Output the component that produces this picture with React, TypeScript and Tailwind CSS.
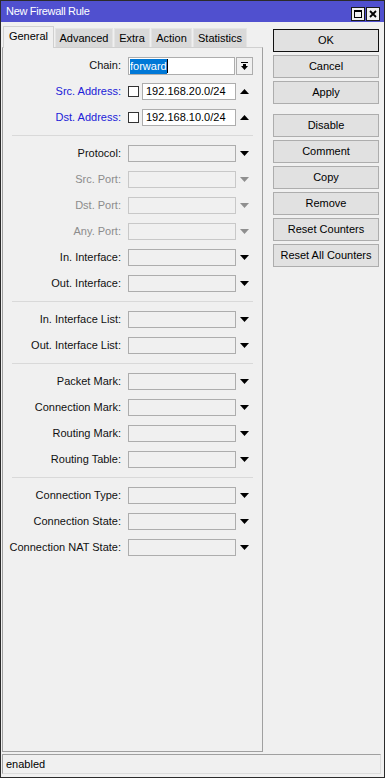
import React from "react";

type Row = { label: string; tone?: "dim" };

const GROUPS: Row[][] = [
    [
        { label: "Protocol" },
        { label: "Src. Port", tone: "dim" },
        { label: "Dst. Port", tone: "dim" },
        { label: "Any. Port", tone: "dim" },
        { label: "In. Interface" },
        { label: "Out. Interface" },
    ],
    [{ label: "In. Interface List" }, { label: "Out. Interface List" }],
    [
        { label: "Packet Mark" },
        { label: "Connection Mark" },
        { label: "Routing Mark" },
        { label: "Routing Table" },
    ],
    [
        { label: "Connection Type" },
        { label: "Connection State" },
        { label: "Connection NAT State" },
    ],
];

const TABS = [
    { title: "General", w: "w-[51px]", active: true },
    { title: "Advanced", w: "w-[58px]" },
    { title: "Extra", w: "w-[36px]" },
    { title: "Action", w: "w-[41px]" },
    { title: "Statistics", w: "w-[54px]" },
];

const BUTTONS = [
    ["OK", "Cancel", "Apply"],
    ["Disable", "Comment", "Copy", "Remove", "Reset Counters", "Reset All Counters"],
];

function Tri({ up, dim }: { up?: boolean; dim?: boolean }) {
    return (
        <svg width="9" height="5" viewBox="0 0 9 5">
            <polygon points={up ? "0,5 9,5 4.5,0" : "0,0 9,0 4.5,5"} fill={dim ? "#8f8f8f" : "#000"} />
        </svg>
    );
}

function Separator() {
    return <div className="h-px bg-[#d9d9d9] ml-[9px] mr-[9px] my-[9px]" />;
}

function Label({ text, tone }: { text: string; tone?: "dim" | "blue" }) {
    const color = tone === "dim" ? "text-[#8c8c8c]" : tone === "blue" ? "text-[#2020d8]" : "text-[#111]";
    return <div className={`w-[119px] text-right pr-px ${color}`}>{text}:</div>;
}

function EmptyRow({ label, tone }: Row) {
    return (
        <div className="flex items-center h-[17px] leading-[17px]">
            <Label text={label} tone={tone} />
            <div className={`ml-[6px] w-[108px] h-[17px] border ${tone === "dim" ? "border-[#c8c8c8]" : "border-[#adadad]"}`} />
            <div className="w-[17px] flex justify-center">
                <Tri dim={tone === "dim"} />
            </div>
        </div>
    );
}

function AddressRow({ label, value }: { label: string; value: string }) {
    return (
        <div className="flex items-center h-[17px] leading-[15px]">
            <Label text={label} tone="blue" />
            <div className="ml-[6px] w-[11px] h-[11px] border border-[#333] bg-white" />
            <div className="ml-[3px] w-[94px] h-[17px] border border-[#adadad] bg-white pl-[3px] text-black">{value}</div>
            <div className="w-[17px] flex justify-center pr-px">
                <Tri up />
            </div>
        </div>
    );
}

export default function App() {
    return (
        <div className="w-[385px] h-[778px] border border-[#2b2b2b] bg-[#f0f0f0] flex flex-col text-[11px] font-['Liberation_Sans',Arial,sans-serif] text-black overflow-hidden">
            {/* title bar */}
            <div className="h-[21px] bg-[#5050cf] flex justify-between pl-[5px] pr-[4px]">
                <span className="text-white leading-[21px] tracking-[-0.3px]">New Firewall Rule</span>
                <div className="flex items-end gap-px pb-px">
                    <div className="w-[14px] h-[14px] border border-[#1a1a1a] bg-[#f0f0f0] flex items-center justify-center">
                        <svg width="8" height="8" viewBox="0 0 8 8">
                            <rect x="0.5" y="0.5" width="7" height="7" fill="none" stroke="#000" />
                            <rect x="0" y="0" width="8" height="2" fill="#000" />
                        </svg>
                    </div>
                    <div className="w-[14px] h-[14px] border border-[#1a1a1a] bg-[#f0f0f0] flex items-center justify-center">
                        <svg width="8" height="8" viewBox="0 0 8 8">
                            <path d="M1 1 L7 7 M7 1 L1 7" stroke="#000" strokeWidth="1.8" />
                        </svg>
                    </div>
                </div>
            </div>

            <div className="flex flex-1 pt-[4px]">
                {/* left: tabs + panel */}
                <div className="w-[261px] ml-px flex flex-col">
                    <div className="h-[21px] flex items-end gap-px pl-px">
                        {TABS.map((t) =>
                            t.active ? (
                                <div
                                    key={t.title}
                                    className={`${t.w} h-[22px] -mb-px relative z-10 bg-[#f0f0f0] border-l border-t border-r border-[#d0d0d0] flex items-center justify-center pb-[2px]`}
                                >
                                    {t.title}
                                </div>
                            ) : (
                                <div
                                    key={t.title}
                                    className={`${t.w} h-[19px] bg-[#d9d9d9] border-l border-t border-r border-[#e4e4e4] flex items-center justify-center`}
                                >
                                    {t.title}
                                </div>
                            )
                        )}
                    </div>
                    <div className="flex-1 border border-[#a0a0a0] border-t-[#d0d0d0] pt-[9px] flex flex-col">
                        <div className="flex flex-col gap-[9px]">
                            <div className="flex items-center h-[17px] leading-[15px]">
                                <Label text="Chain" />
                                <div className="ml-[6px] w-[107px] h-[18px] border border-[#adadad] bg-white pl-px pt-px flex items-start">
                                    <span className="bg-[#0078d7] text-white">forward</span>
                                    <span className="w-px h-[14px] bg-black" />
                                </div>
                                <div className="ml-px w-[17px] h-[18px] border border-[#adadad] bg-[#f0f0f0] flex items-center justify-center">
                                    <svg width="7" height="8" viewBox="0 0 7 8">
                                        <rect x="0" y="0" width="7" height="1" fill="#000" />
                                        <rect x="2" y="2" width="3" height="2" fill="#000" />
                                        <polygon points="0,4 7,4 3.5,8" fill="#000" />
                                    </svg>
                                </div>
                            </div>
                            <AddressRow label="Src. Address" value="192.168.20.0/24" />
                            <AddressRow label="Dst. Address" value="192.168.10.0/24" />
                        </div>
                        {GROUPS.map((g, i) => (
                            <React.Fragment key={i}>
                                <Separator />
                                <div className="flex flex-col gap-[9px]">
                                    {g.map((r) => (
                                        <EmptyRow key={r.label} label={r.label} tone={r.tone} />
                                    ))}
                                </div>
                            </React.Fragment>
                        ))}
                    </div>
                </div>

                {/* right: buttons */}
                <div className="ml-[10px] w-[106px] pt-[3px] flex flex-col gap-[10px]">
                    {BUTTONS.map((grp, gi) => (
                        <div key={gi} className="flex flex-col gap-[3px]">
                            {grp.map((b) => (
                                <button
                                    key={b}
                                    className={`h-[23px] w-full bg-[#e1e1e1] border ${b === "OK" ? "border-[#111]" : "border-[#adadad]"} text-black text-[11px] leading-[21px]`}
                                >
                                    {b}
                                </button>
                            ))}
                        </div>
                    ))}
                </div>
            </div>

            {/* status bar */}
            <div className="mt-[2px] mb-[3px] ml-px mr-[3px] h-[20px] border border-[#a0a0a0] border-r-[#dcdcdc] border-b-[#dcdcdc] pl-[3px] leading-[18px]">
                enabled
            </div>
        </div>
    );
}
